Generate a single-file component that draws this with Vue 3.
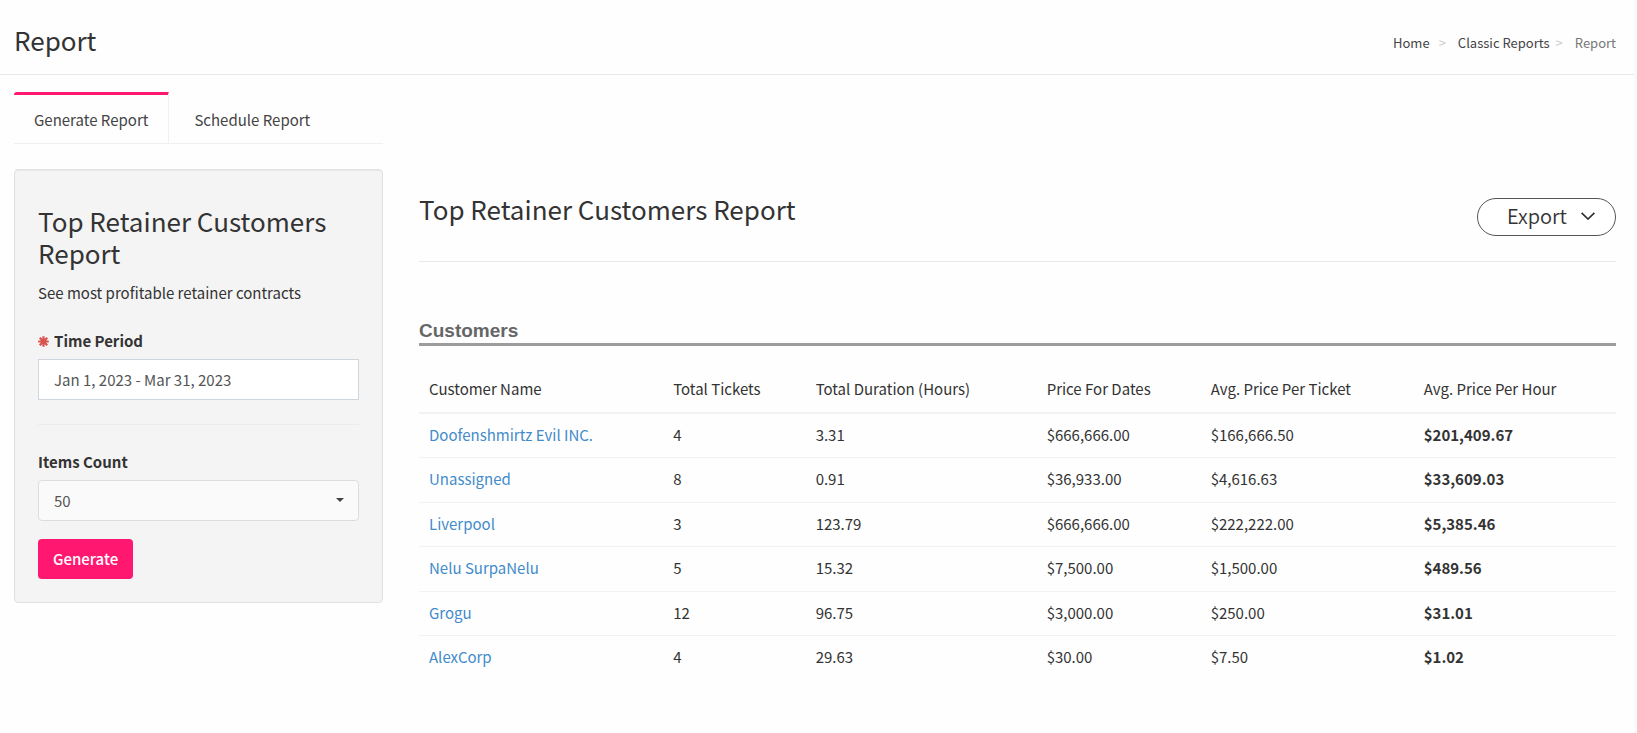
<script setup>
import { ref } from 'vue'

const period = ref('Jan 1, 2023 - Mar 31, 2023')
const count = ref('50')
const columns = ['Customer Name', 'Total Tickets', 'Total Duration (Hours)', 'Price For Dates', 'Avg. Price Per Ticket', 'Avg. Price Per Hour']
const rows = [
  ['Doofenshmirtz Evil INC.', '4', '3.31', '$666,666.00', '$166,666.50', '$201,409.67'],
  ['Unassigned', '8', '0.91', '$36,933.00', '$4,616.63', '$33,609.03'],
  ['Liverpool', '3', '123.79', '$666,666.00', '$222,222.00', '$5,385.46'],
  ['Nelu SurpaNelu', '5', '15.32', '$7,500.00', '$1,500.00', '$489.56'],
  ['Grogu', '12', '96.75', '$3,000.00', '$250.00', '$31.01'],
  ['AlexCorp', '4', '29.63', '$30.00', '$7.50', '$1.02'],
]
</script>

<template>
  <div class="page">
    <header class="topbar">
      <h1 class="title">Report</h1>
      <nav aria-label="Breadcrumb">
        <ol class="crumbs">
          <li><a href="#">Home</a></li>
          <li class="sep" aria-hidden="true">&gt;</li>
          <li><a href="#">Classic Reports</a></li>
          <li class="sep near" aria-hidden="true">&gt;</li>
          <li class="current">Report</li>
        </ol>
      </nav>
    </header>

    <div class="columns">
      <aside>
        <nav class="tabs">
          <a class="tab active" href="#">Generate Report</a>
          <a class="tab" href="#">Schedule Report</a>
        </nav>

        <form class="panel" @submit.prevent>
          <h2 class="heading">Top Retainer Customers Report</h2>
          <p class="desc">See most profitable retainer contracts</p>
          <label class="label" for="period">
            <svg class="required" viewBox="0 0 10 10" aria-hidden="true">
              <path d="M5 0.2V9.8M0.2 5H9.8M1.6 1.6L8.4 8.4M8.4 1.6L1.6 8.4" stroke="#d9534f" stroke-width="2" />
            </svg>
            Time Period
          </label>
          <input id="period" v-model="period" class="field" type="text">
          <hr class="rule">
          <label class="label" for="count">Items Count</label>
          <div class="select-wrap">
            <select id="count" v-model="count" class="field select">
              <option>50</option>
              <option>100</option>
            </select>
            <svg class="caret" viewBox="0 0 8 4" aria-hidden="true"><path d="M0 0H8L4 4Z" fill="#444" /></svg>
          </div>
          <button class="generate" type="submit">Generate</button>
        </form>
      </aside>

      <main class="report">
        <div class="report-head">
          <h2 class="heading">Top Retainer Customers Report</h2>
          <button class="export" type="button">
            Export
            <svg class="chevron" viewBox="0 0 14 8" aria-hidden="true"><path d="M0.6 0.8L7 7L13.4 0.8" fill="none" stroke="#333" stroke-width="1.7" /></svg>
          </button>
        </div>
        <h3 class="section">Customers</h3>
        <table class="table">
          <thead>
            <tr><th v-for="c in columns" :key="c" scope="col">{{ c }}</th></tr>
          </thead>
          <tbody>
            <tr v-for="r in rows" :key="r[0]">
              <td><a href="#">{{ r[0] }}</a></td>
              <td v-for="(v, i) in r.slice(1)" :key="i">{{ v }}</td>
            </tr>
          </tbody>
        </table>
      </main>
    </div>
  </div>
</template>

<style>
body {
  background: #fefefe;
}
</style>

<style scoped>
* {
  box-sizing: border-box;
}
.page {
  min-height: 100vh;
  border-right: 3px solid #fafafa;
  font: 15px/22px "Noto Sans CJK SC", "Noto Sans", sans-serif;
  color: #333;
}
a {
  text-decoration: none;
}
.topbar {
  display: flex;
  justify-content: space-between;
  align-items: center;
  height: 75px;
  padding: 6px 18px 0 14px;
  border-bottom: 1px solid #e7e8e9;
}
.title,
.heading {
  margin: 0;
  font-size: 26px;
  line-height: 32px;
  font-weight: 400;
}
.crumbs {
  display: flex;
  gap: 9px;
  margin: 0;
  padding: 5px 0 0;
  list-style: none;
  font-size: 13px;
}
.crumbs a {
  color: #444;
}
.sep {
  margin-right: 3px;
  color: #ccc;
}
.sep.near {
  margin-left: -3px;
}
.current {
  color: #777;
}
.columns {
  display: grid;
  grid-template-columns: 369px 1fr;
  gap: 36px;
  padding: 17px 18px 0 14px;
}
.tabs {
  display: flex;
  border-bottom: 1px solid #f0f0f0;
}
.tab {
  padding: 15px 25px 13px;
  border-top: 3px solid transparent;
  line-height: 20px;
  color: #444;
}
.tab.active {
  padding-right: 20px;
  padding-left: 20px;
  border-top-color: #ff1770;
  border-right: 1px solid #f0f0f0;
  border-top-left-radius: 3px;
}
.panel {
  margin-top: 25px;
  padding: 35px 23px 23px;
  border: 1px solid #e1e1e1;
  border-radius: 4px;
  background: #f4f4f4;
  box-shadow: inset 0 1px 1px rgba(0, 0, 0, 0.05);
}
.desc {
  margin: 13px 0 26px;
}
.label {
  display: flex;
  align-items: center;
  gap: 5px;
  margin-bottom: 7px;
  font-weight: 700;
}
.required {
  width: 11px;
  height: 11px;
}
.field {
  display: block;
  width: 100%;
  height: 41px;
  padding: 0 15px;
  border: 1px solid #cfd5de;
  border-radius: 0;
  background: #fff;
  font: inherit;
  color: #555;
}
.rule {
  margin: 24px 0 26px;
  border: 0;
  border-top: 1px solid #ececec;
}
.select-wrap {
  position: relative;
}
.select {
  appearance: none;
  border-color: #ddd;
  border-radius: 4px;
  background: #fafafa;
}
.caret {
  position: absolute;
  top: 18px;
  right: 15px;
  width: 8px;
  height: 4px;
}
.generate {
  margin-top: 18px;
  height: 40px;
  padding: 0 15px;
  border: 0;
  border-radius: 4px;
  background: #ff1770;
  font: inherit;
  font-weight: 500;
  color: #fff;
}
.report {
  padding-top: 101px;
}
.report-head {
  display: flex;
  justify-content: space-between;
  align-items: flex-start;
  height: 69px;
  border-bottom: 1px solid #eaeaea;
}
.export {
  display: flex;
  align-items: center;
  gap: 14px;
  height: 38px;
  margin-top: 5px;
  padding: 0 20px 2px 29px;
  border: 1px solid #555;
  border-radius: 19px;
  background: #fff;
  font: inherit;
  font-size: 20px;
  font-weight: 350;
  color: #333;
}
.chevron {
  width: 14px;
  height: 8px;
}
.section {
  margin: 57px 0 22px;
  border-bottom: 3px solid #9b9c9b;
  font: 700 19px/24px "Liberation Sans", Arial, sans-serif;
  color: #666;
}
.table {
  width: 100%;
  table-layout: fixed;
  border-collapse: separate;
  border-spacing: 0;
  line-height: 1.5;
}
th,
td {
  padding: 10px 10px 11px;
  border-bottom: 1px solid #f2f2f2;
  text-align: left;
  font-weight: 400;
}
th {
  border-bottom-width: 2px;
}
th:nth-child(1) {
  width: 20.4%;
}
th:nth-child(2) {
  width: 11.9%;
}
th:nth-child(3) {
  width: 19.3%;
}
th:nth-child(4) {
  width: 13.7%;
}
th:nth-child(5) {
  width: 17.8%;
}
td:last-child {
  font-weight: 700;
}
tbody tr:last-child td {
  border-bottom: 0;
}
td a {
  color: #428bca;
}
</style>
